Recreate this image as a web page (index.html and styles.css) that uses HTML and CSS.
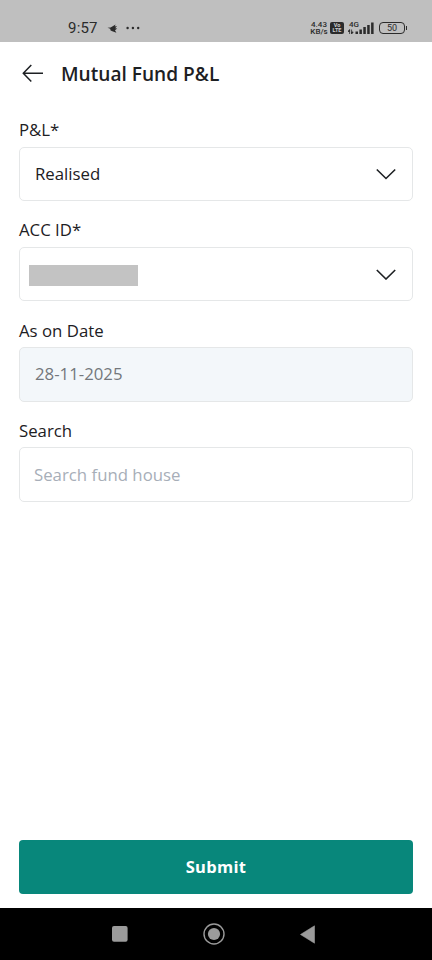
FILE: index.html
```html
<!DOCTYPE html>
<html lang="en">
<head>
<meta charset="utf-8">
<meta name="viewport" content="width=device-width, initial-scale=1">
<title>Mutual Fund P&amp;L</title>
<link rel="stylesheet" href="styles.css">
</head>
<body>
<div class="screen">
  <div class="status">
    <span class="clock">9:57</span>
    <svg class="bird" width="12" height="10" viewBox="0 0 12 10"><path d="M.5 3.8L3.6 3.4L8.6 .4L7.8 2.6L10 2L8.2 4.3L10.2 4.6L8 6.2L9.4 8.8L6 7.6L3.6 6.6L3.2 4.8Z"/></svg>
    <svg class="dots" width="14" height="4" viewBox="0 0 14 4"><circle cx="1.6" cy="2" r="1.2"/><circle cx="6.9" cy="2" r="1.2"/><circle cx="12.2" cy="2" r="1.2"/></svg>
    <span class="speed"><span>4.43</span><span>KB/s</span></span>
    <span class="volte"><span>Vo</span><span>LTE</span></span>
    <span class="signal">
      <span class="network">4G</span>
      <svg width="27" height="13" viewBox="0 0 27 13"><path d="M1.6 12V8M0 9.5L1.6 7.5V9.5ZM3.6 7.5V11.5M3.6 12L5.2 10H3.6Z" stroke="#2b2b2b" stroke-width=".8"/><path d="M7.5 9.5h2.5V12H7.5zM11.4 7.5h2.5V12h-2.5zM15.3 5h2.5v7h-2.5zM19.2 3h2.5v9h-2.5zM23.1 .5h2.5V12h-2.5z"/></svg>
    </span>
    <span class="battery">50</span>
  </div>
  <header class="header">
    <svg class="back" width="22" height="20" viewBox="0 0 22 20"><path d="M21 10.3H1.3M9.3 1.9L1.3 10.3L9.3 18.5"/></svg>
    <h1>Mutual Fund P&amp;L</h1>
  </header>
  <main class="form">
    <div class="field"><label>P&amp;L*</label>
      <div class="control"><span>Realised</span><svg class="chevron" width="20" height="12" viewBox="0 0 20 12"><path d="M.8 1.5L10 10.5L19.2 1.5"/></svg></div></div>
    <div class="field"><label>ACC ID*</label>
      <div class="control"><span class="mask"></span><svg class="chevron" width="20" height="12" viewBox="0 0 20 12"><path d="M.8 2L10 11L19.2 2"/></svg></div></div>
    <div class="field"><label>As on Date</label>
      <div class="control disabled"><span>28-11-2025</span></div></div>
    <div class="field"><label>Search</label>
      <div class="control search"><span>Search fund house</span></div></div>
  </main>
  <button class="submit">Submit</button>
  <nav class="nav">
    <svg width="16" height="16" viewBox="0 0 16 16"><rect width="15.6" height="15.8" rx="2"/></svg>
    <svg width="22" height="22" viewBox="0 0 22 22"><circle cx="11" cy="11" r="10" fill="none" stroke="#9b9b9b" stroke-width="1.4"/><circle cx="11" cy="11" r="6.1"/></svg>
    <svg width="15" height="19" viewBox="0 0 15 19"><path d="M.5 9.5L14.5 .8V18.2Z" stroke="#9b9b9b" stroke-width=".6" stroke-linejoin="round"/></svg>
  </nav>
</div>
</body>
</html>
```
FILE: styles.css
```css
* { box-sizing: border-box; }
body { margin: 0; background: #fff; color: #1d2023; font-family: "Open Sans", "Noto Sans", sans-serif; }
.screen { width: 432px; height: 960px; display: flex; flex-direction: column; overflow: hidden; }
.status { height: 42px; flex: none; display: flex; align-items: center; padding: 14px 24px 0 68px; background: #bfbfbf; color: #2b2b2b; fill: #2b2b2b; font-family: Roboto, sans-serif; }
.clock { width: 39px; font-size: 15px; letter-spacing: .2px; line-height: 18px; }
.bird { margin-top: 1px; }
.dots { margin-left: 7px; }
.speed { width: 18px; margin-left: 170px; display: flex; flex-direction: column; align-items: center; font-size: 8px; line-height: 7.5px; font-weight: 500; white-space: nowrap; }
.volte { width: 14px; height: 12px; margin-left: 2px; padding: 1px; display: flex; flex-direction: column; align-items: center; border-radius: 2px; background: #2b2b2b; color: #d0d0d0; font-size: 5.5px; line-height: 5px; font-weight: 700; }
.signal { position: relative; width: 27px; height: 13px; margin-left: 4px; }
.signal svg { display: block; }
.network { position: absolute; left: 1px; top: -1px; font-size: 8px; line-height: 8px; font-weight: 500; }
.battery { position: relative; width: 26px; height: 12px; margin-left: 4px; border: 1.3px solid #2b2b2b; border-radius: 4px; font-size: 9px; line-height: 10px; text-align: center; }
.battery::after { content: ""; position: absolute; right: -3px; top: 3px; width: 1.5px; height: 4px; background: #2b2b2b; }
.header { height: 76px; flex: none; display: flex; padding: 19px 0 0 22px; }
.back { margin-top: 2px; fill: none; stroke: #1d2023; stroke-width: 1.5; }
h1 { margin: 0 0 0 17px; font-size: 19.1px; line-height: 26px; font-weight: 600; }
.form { flex: 1; padding: 0 19px; }
.field { height: 100.3px; }
label { display: block; height: 28.5px; font-size: 16.8px; line-height: 24px; }
.control { height: 54.5px; display: flex; align-items: center; justify-content: space-between; padding: 0 16px 0 15px; border: 1px solid #e5e7e8; border-radius: 5px; font-size: 16.8px; line-height: 24px; }
.chevron { fill: none; stroke: #1d2023; stroke-width: 1.6; }
.mask { width: 109px; height: 21px; margin: 2px 0 0 -6px; background: #c3c3c3; }
.disabled { background: #f3f7fa; color: #73777c; }
.search { padding-left: 14px; color: #a7aeb8; }
.submit { height: 54px; flex: none; margin: 0 19px 14px; padding: 0; border: 0; border-radius: 4px; background: #08877b; color: #fff; font: 700 16.5px/24px "Open Sans", sans-serif; letter-spacing: .3px; }
.nav { height: 52px; flex: none; display: flex; align-items: center; justify-content: space-between; padding: 0 117px 0 112px; background: #000; fill: #9b9b9b; }
```
